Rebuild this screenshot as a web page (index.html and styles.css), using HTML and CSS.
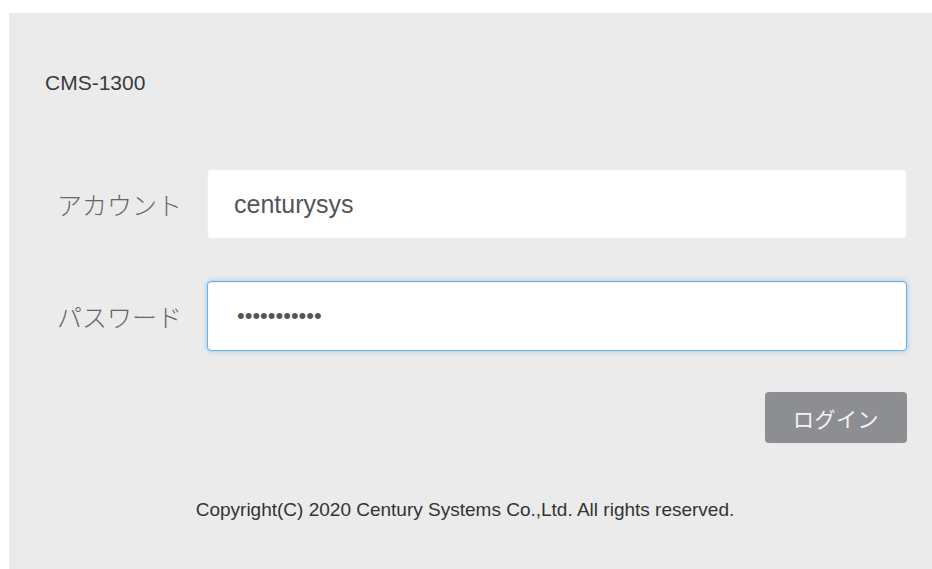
FILE: index.html
```html
<!DOCTYPE html>
<html lang="ja">
<head>
<meta charset="utf-8">
<title>CMS-1300 ログイン</title>
<link rel="stylesheet" href="styles.css">
</head>
<body>
  <main class="panel">
    <h1 class="product">CMS-1300</h1>
    <form class="login-form" onsubmit="return false;">
      <label class="field-label" for="account">アカウント</label>
      <input class="field-input" id="account" type="text" value="centurysys">
      <label class="field-label" for="password">パスワード</label>
      <input class="field-input is-active" id="password" type="password" value="centurysys1">
      <button class="login-button" type="submit">ログイン</button>
    </form>
    <p class="copyright">Copyright(C) 2020 Century Systems Co.,Ltd. All rights reserved.</p>
  </main>
</body>
</html>
```
FILE: styles.css
```css
html, body {
  margin: 0;
  padding: 0;
  background: #ffffff;
}

body {
  font-family: "Liberation Sans", Arial, "Noto Sans CJK JP", sans-serif;
  color: #333333;
}

.panel {
  margin: 13px 0 0 9px;
  min-height: 556px;
  box-sizing: border-box;
  background: #ebebeb;
  padding: 58px 25px 0 36px;
  display: flex;
  flex-direction: column;
}

.product {
  margin: 0;
  font-size: 21px;
  line-height: 24px;
  font-weight: normal;
  color: #3a3a3a;
}

.login-form {
  margin-top: 74px;
  display: grid;
  grid-template-columns: 137px 1fr;
  column-gap: 25px;
  row-gap: 42px;
  align-items: center;
}

.field-label {
  justify-self: end;
  font-family: "Noto Sans CJK JP", sans-serif;
  font-weight: 300;
  font-size: 25px;
  line-height: 30px;
  color: #666666;
  white-space: nowrap;
}

.field-input {
  box-sizing: border-box;
  width: 100%;
  height: 70px;
  margin: 0;
  padding: 0 24px 0 26px;
  border: 1px solid #f0f0f0;
  border-radius: 4px;
  background: #ffffff;
  font-family: "Liberation Sans", Arial, sans-serif;
  font-size: 25px;
  color: #555555;
  outline: none;
}

.field-input[type="password"] {
  font-size: 22px;
  padding-left: 29px;
  letter-spacing: 0;
}

.field-input.is-active {
  border-color: #66afe9;
  box-shadow: inset 0 1px 1px rgba(0, 0, 0, 0.075), 0 0 5px rgba(102, 175, 233, 0.6);
}

.login-button {
  grid-column: 2;
  justify-self: end;
  margin-top: -1px;
  width: 142px;
  height: 51px;
  border: none;
  border-radius: 4px;
  background: #8d8e91;
  color: #f4f4f4;
  font-family: "Noto Sans CJK JP", sans-serif;
  font-size: 21px;
  letter-spacing: 0.5px;
  cursor: pointer;
}

.copyright {
  margin: 56px 22px 0 0;
  text-align: center;
  font-size: 19px;
  line-height: 22px;
  color: #333333;
}
```
